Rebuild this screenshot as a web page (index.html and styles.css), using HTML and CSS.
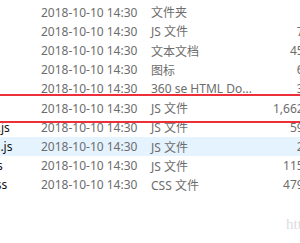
FILE: index.html
```html
<!DOCTYPE html>
<html lang="zh-CN">
<head>
    <meta charset="UTF-8">
    <title>文件列表</title>
    <link rel="stylesheet" href="styles.css">
</head>
<body>
    <div class="list">
        <div class="row">
            <span class="name">images</span>
            <span class="date">2018-10-10 14:30</span>
            <span class="type">文件夹</span>
            <span class="size"></span>
        </div>
        <div class="row">
            <span class="name">app.js</span>
            <span class="date">2018-10-10 14:30</span>
            <span class="type">JS 文件</span>
            <span class="size">7 KB</span>
        </div>
        <div class="row">
            <span class="name">log.txt</span>
            <span class="date">2018-10-10 14:30</span>
            <span class="type">文本文档</span>
            <span class="size">45 KB</span>
        </div>
        <div class="row">
            <span class="name">favicon.ico</span>
            <span class="date">2018-10-10 14:30</span>
            <span class="type">图标</span>
            <span class="size">6 KB</span>
        </div>
        <div class="row">
            <span class="name">index.html</span>
            <span class="date">2018-10-10 14:30</span>
            <span class="type">360 se HTML Do...</span>
            <span class="size">3 KB</span>
        </div>
        <div class="row marked">
            <span class="name">vue.js</span>
            <span class="date">2018-10-10 14:30</span>
            <span class="type">JS 文件</span>
            <span class="size">1,662 KB</span>
        </div>
        <div class="row">
            <span class="name">vue-router.js</span>
            <span class="date">2018-10-10 14:30</span>
            <span class="type">JS 文件</span>
            <span class="size">59 KB</span>
        </div>
        <div class="row hover">
            <span class="name">swiper.min.js</span>
            <span class="date">2018-10-10 14:30</span>
            <span class="type">JS 文件</span>
            <span class="size">2 KB</span>
        </div>
        <div class="row">
            <span class="name">layer.min.js</span>
            <span class="date">2018-10-10 14:30</span>
            <span class="type">JS 文件</span>
            <span class="size">115 KB</span>
        </div>
        <div class="row">
            <span class="name">iconfont.css</span>
            <span class="date">2018-10-10 14:30</span>
            <span class="type">CSS 文件</span>
            <span class="size">479 KB</span>
        </div>
    </div>
    <div class="watermark">https://blog.csdn.net</div>
</body>
</html>
```
FILE: styles.css
```css
html, body {
    margin: 0;
    height: 100%;
    overflow: hidden;
    background: #fff;
}
body {
    position: relative;
    font-family: "Noto Sans", "Noto Sans CJK SC", sans-serif;
    font-size: 12px;
    color: #6d6d6d;
}
.list {
    margin-left: -80px;
    width: 420px;
    padding-top: 2.6px;
}
.row {
    display: grid;
    grid-template-columns: 121px 110px 100px 71px;
    height: 19.2px;
    align-items: center;
    white-space: nowrap;
}
.row.hover {
    background: #e5f3ff;
}
.row.marked {
    outline: 2px solid #ec2f38;
    outline-offset: 3px;
}
.name {
    color: #111;
    overflow: hidden;
    padding-left: 20px;
}
.size {
    text-align: right;
}
.watermark {
    position: absolute;
    left: 286px;
    top: 216px;
    font-family: "Liberation Serif", serif;
    font-size: 15px;
    color: #dcdcdc;
    white-space: nowrap;
}
```
